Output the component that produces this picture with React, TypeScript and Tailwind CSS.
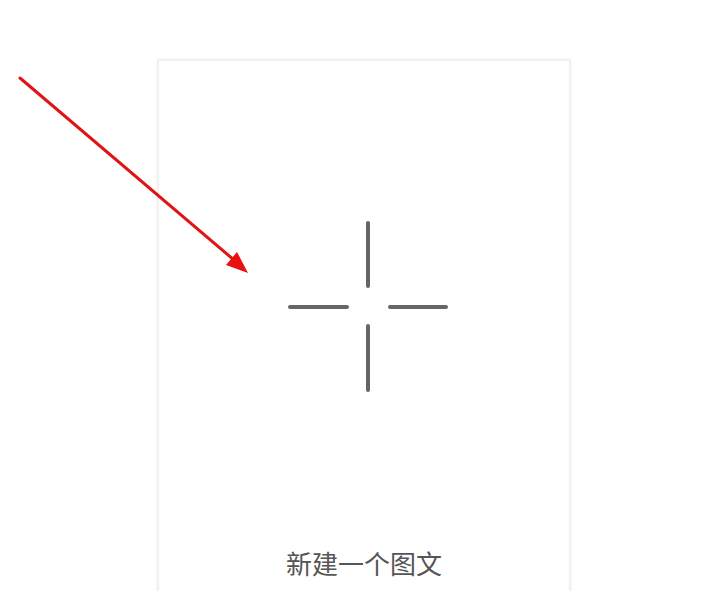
const Arrow = () => (
    <svg className="absolute left-0 top-0" width="260" height="290" viewBox="0 0 260 290">
        <line x1="20" y1="78" x2="234" y2="260" stroke="#e01414" strokeWidth="3" strokeLinecap="round" />
        <polygon points="248,273 226,265 237,252" fill="#e81010" />
    </svg>
);

const CrossIcon = () => (
    <svg width="164" height="176" viewBox="0 0 164 176" className="ml-[8px] mt-[158px]">
        <g stroke="#666666" strokeWidth="4" strokeLinecap="round">
            <line x1="82" y1="4" x2="82" y2="67" />
            <line x1="82" y1="107" x2="82" y2="171" />
            <line x1="4" y1="88" x2="61" y2="88" />
            <line x1="104" y1="88" x2="160" y2="88" />
        </g>
    </svg>
);

export default function App() {
    return (
        <div className="relative h-[591px] w-[720px] overflow-hidden bg-white font-['Noto_Sans_CJK_SC',sans-serif]">
            <div className="ml-[157px] mt-[59px] flex h-[560px] w-[414px] flex-col items-center border-2 border-[#f0f0f0] bg-white shadow-[0_0_3px_rgba(0,0,0,0.06)]">
                <CrossIcon />
                <p className="mt-[153px] text-[26px] leading-[30px] text-[#555555]">新建一个图文</p>
            </div>
            <Arrow />
        </div>
    );
}
